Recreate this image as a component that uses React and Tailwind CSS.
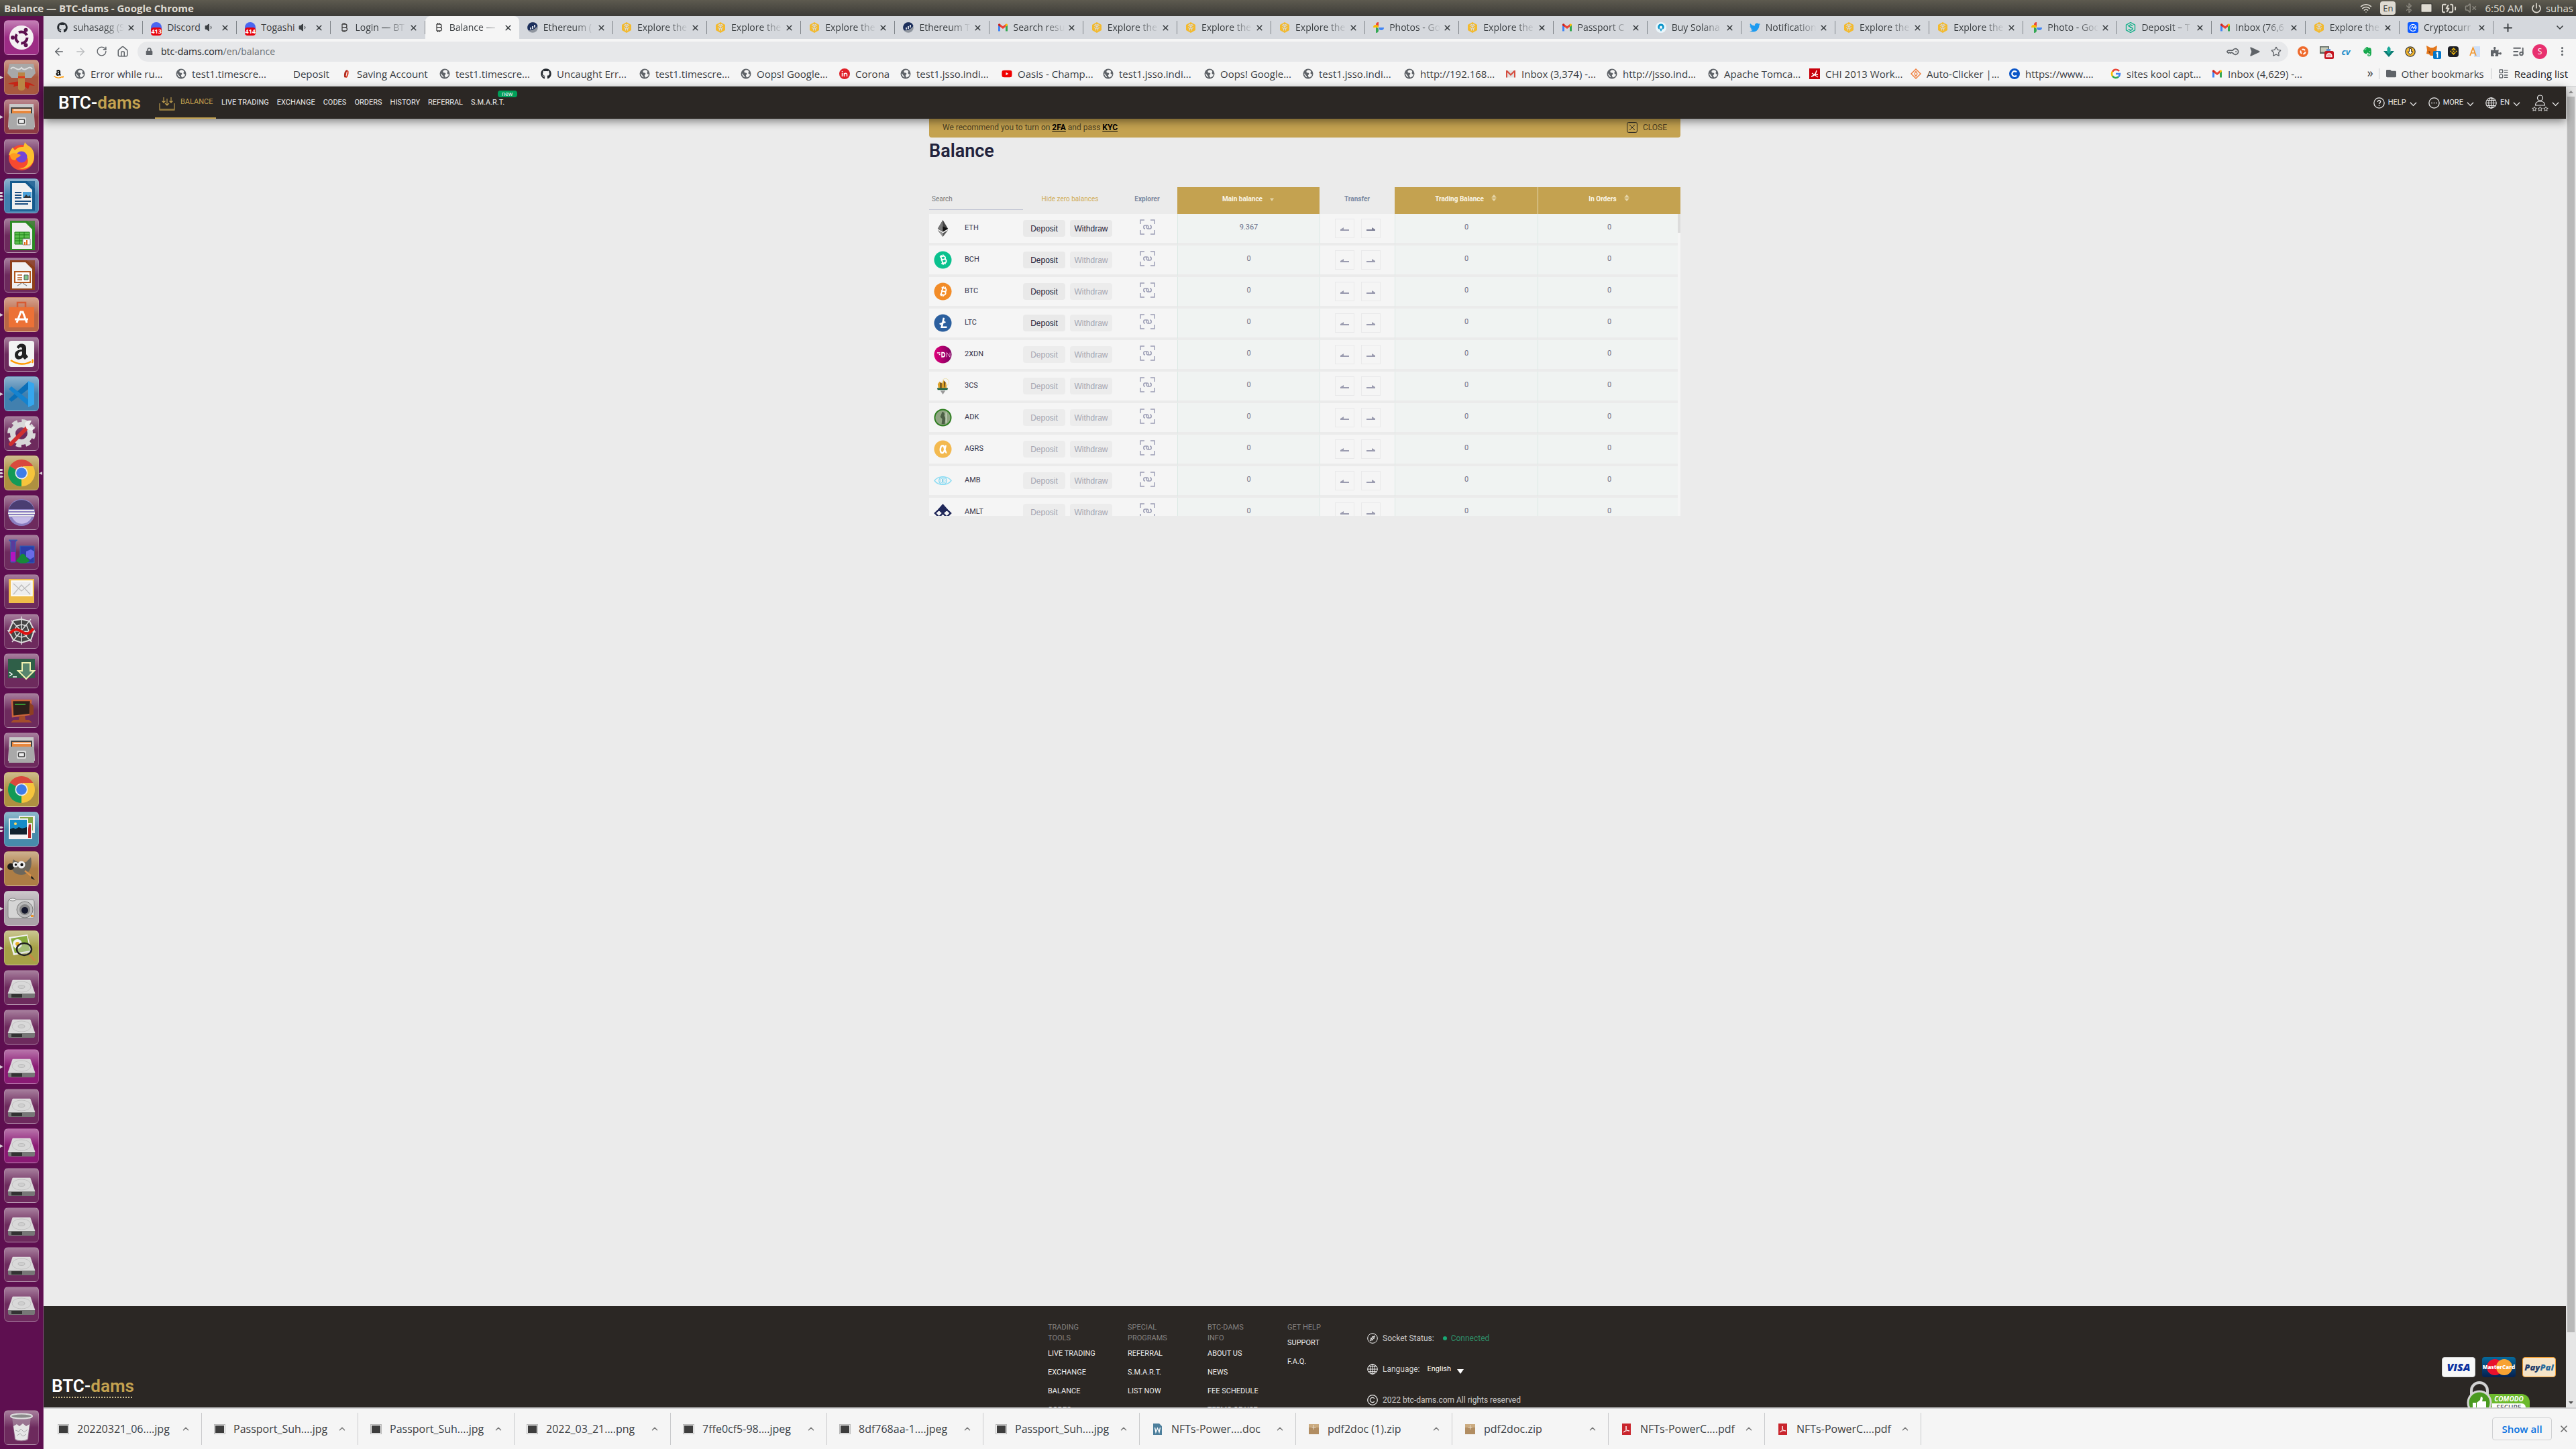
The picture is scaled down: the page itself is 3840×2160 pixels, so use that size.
import React from "react";
import { FaGithub, FaTwitter, FaYoutube, FaEvernote, FaPuzzlePiece, FaFolder, FaUbuntu, FaLock } from "react-icons/fa";
import { SiBinance } from "react-icons/si";
import {
  ArrowLeft, ArrowRight, RotateCw, House, Star, X, Plus, ChevronDown, ChevronUp, Wifi, Bluetooth, Mail,
  BatteryCharging, VolumeX, Volume1, KeyRound, SendHorizontal, ListMusic, EllipsisVertical, LayoutList, Power,
} from "lucide-react";

/* ---------- small site icons ---------- */

const Svg = ({ size = 16, box = 16, children, className = "" }) => (
  <svg width={size} height={size} viewBox={`0 0 ${box} ${box}`} fill="none" className={`shrink-0 ${className}`} aria-hidden="true">
    {children}
  </svg>
);

const Globe = () => (
  <Svg>
    <circle cx="8" cy="8" r="7.500" fill="#5f6368" />
    <path d="M9 2.200c-2.200.2-3.400 1-3.600 2.200-.2 1.400.8 2 2.200 2.100 1.500.1 2 .9 1.600 1.900-.3.8-1.300 1-1.300 2.200 0 1 .6 1.600 1.400 2.900C12 13 14 11 14 8.500 12.500 9 11.500 8 11.500 6.800c0-1 .8-1.500.6-2.600C11.500 3 10.300 2.200 9 2.200zM2 7.500c.3 2.900 2 5 4.300 5.900-.3-1.300-.3-2-1.300-2.700C3.800 10 3.700 8 2 7.500z" fill="#f5f5f5" />
  </Svg>
);
const Gmail = () => (
  <Svg>
    <path d="M1 4v9.500h3V7z" fill="#4285f4" />
    <path d="M15 4v9.500h-3V7z" fill="#34a853" />
    <path d="M1 4c0-1.600 1.600-2 2.600-1.200L8 6.200l4.400-3.400L12 7 8 10 4 7 1 4.800z" fill="#ea4335" />
    <path d="M15 4.800 12 7V3.100l.4-.3C13.400 2 15 2.400 15 4z" fill="#fbbc04" />
    <path d="M1 4.800V4c0-1.600 1.600-2 2.600-1.200L4 3.100V7z" fill="#c5221f" />
  </Svg>
);
const GmailOld = () => (
  <Svg>
    <path d="M1 3h14v10.500H1z" fill="#e0e0e0" />
    <path d="M1 3h2l5 5 5-5h2v10.500h-2V6L8 11 3 6v7.500H1z" fill="#d54b3d" />
  </Svg>
);
const Photos = () => (
  <Svg>
    <path d="M8 8V0a4 4 0 0 0-4 4 4 4 0 0 0 4 4z" fill="#ea4335" />
    <path d="M8 8h8a4 4 0 0 1-4 4 4 4 0 0 1-4-4z" fill="#4285f4" />
    <path d="M8 8v8a4 4 0 0 0 4-4 4 4 0 0 0-4-4z" fill="#34a853" transform="translate(-4 0)" />
    <path d="M8 8H0a4 4 0 0 1 4-4 4 4 0 0 1 4 4z" fill="#fbbc04" />
  </Svg>
);
const DiscordFav = ({ n }) => (
  <span className="relative block h-4 w-4 shrink-0 rounded-t-full bg-[#4a66f0]">
    <span className="absolute inset-x-0 -bottom-1 rounded-sm bg-red-600 text-center text-[9px] leading-3 font-bold text-white">{n}</span>
  </span>
);
const BitFav = () => (
  <Svg>
    <path d="M5 3v10M5 3h4.500a2.400 2.400 0 0 1 0 5H5h5a2.500 2.500 0 0 1 0 5H5M6.500 1v2M9 1v2M6.500 13v2M9 13v2" stroke="#444" strokeWidth="1.300" />
  </Svg>
);
const EtherFav = () => (
  <Svg>
    <circle cx="8" cy="8" r="7.800" fill="#8f959e" />
    <path d="M8 .2A7.800 7.800 0 0 0 1.500 12.200C6 13 13 10 15.500 5.500A7.800 7.800 0 0 0 8 .2z" fill="#1c2f5c" />
    <path d="M5 8v3M8 6v4M11 4v4" stroke="#fff" strokeWidth="1.600" />
  </Svg>
);
const Bnb = () => (
  <Svg>
    <path d="M8 0l7 4v8l-7 4-7-4V4z" fill="#f3ba2f" />
    <path d="M4 4.500l4 2.300 4-2.300M4 8l2.500 1.500v3M12 8 9.500 9.500v3M8 7v3M5.500 3 8 4.500 10.500 3" stroke="#d5d8dd" strokeWidth="1.200" />
  </Svg>
);
const Solana = () => (
  <Svg>
    <circle cx="8" cy="8" r="8" fill="#eaf6fb" />
    <path d="M8 2.500a4.500 4.500 0 0 0-3 8l1 .5V7.500a2 2 0 1 1 4 0V11l1-.5a4.500 4.500 0 0 0-3-8z" fill="#0a94c9" />
    <path d="M7 9.500h2V12l-1 2-1-2z" fill="#0a94c9" />
  </Svg>
);
const Hexa = () => (
  <Svg>
    <path d="M8 .5l6.500 3.700v7.600L8 15.500l-6.500-3.700V4.200z" stroke="#16b08a" strokeWidth="1.400" />
    <path d="M11 5.500 8 3.800 4.800 5.600 11 9.300v1.300L8 12.300l-3.200-1.800M8 7v2" stroke="#16b08a" strokeWidth="1.500" />
  </Svg>
);
const Cmc = () => (
  <Svg>
    <rect width="16" height="16" rx="3" fill="#0d5bff" />
    <path d="M12.300 11a5 5 0 1 1 .7-3c0 2-2 2-2 0V6.500L8.800 9.500 7.300 6.500 5 9.500" stroke="#fff" strokeWidth="1.100" />
  </Svg>
);
const AmazonFav = () => (
  <Svg>
    <path d="M5 4.200C5.500 1.200 11 1 11 4.500v4l1 1.300-1.700 1.300L9.200 10C7.500 11.700 4.500 11 4.500 8.300c0-2.500 2.500-3 4.400-3.100 0-1.500-1.700-1.500-2 0zM8.900 6.600C7.500 6.700 6.800 7.200 6.800 8.200c0 1.500 2.100 1.300 2.100-.7z" fill="#111" />
    <path d="M1.500 11.500c4 3.200 9 3.200 12.500.6M14.500 14c.6-1 .8-2 .5-2.600" stroke="#f90" strokeWidth="1.400" />
  </Svg>
);
const Saving = () => (
  <Svg>
    <path d="M9.500 2C6 3 4.500 7 5 12c.1 1.500 1.500 2.400 3 1L10 3z" fill="#b02a1e" />
    <path d="M10 3c2 0 2 3 1.300 6-.6 3-2 5-3.600 5z" fill="#e2472f" />
    <path d="M9.200 5 8 11" stroke="#f5f5f5" strokeWidth="1" />
  </Svg>
);
const Corona = () => (
  <Svg>
    <circle cx="8" cy="8" r="8" fill="#e02128" />
    <path d="M4.500 7v5M4.500 4v1.500M7.500 12V7M7.500 9c0-2.500 4-2.500 4 0v3" stroke="#fff" strokeWidth="1.500" />
  </Svg>
);
const Chi = () => (
  <Svg>
    <rect width="16" height="16" fill="#c8000b" />
    <path d="M3 12c4-1 7-4 8-9M4 7l9 6M9 9l4 0" stroke="#fff" strokeWidth="1.400" />
  </Svg>
);
const AutoClick = () => (
  <Svg>
    <path d="M8 1l7 7-7 7-7-7z" stroke="#f08040" strokeWidth="1.500" />
    <path d="M8 4.500c2.500 3 2.500 4 0 7-2.500-3-2.500-4 0-7z" stroke="#f08040" strokeWidth="1.400" />
  </Svg>
);
const CBlue = () => (
  <Svg>
    <circle cx="8" cy="8" r="8" fill="#0a55c8" />
    <path d="M11 5.500a3.800 3.800 0 1 0 0 5" stroke="#fff" strokeWidth="2.200" />
  </Svg>
);
const GoogleG = () => (
  <Svg>
    <path d="M13 4A6 6 0 0 0 3 4.800" stroke="#ea4335" strokeWidth="2.600" />
    <path d="M3 4.800a6 6 0 0 0 0 6.400" stroke="#fbbc04" strokeWidth="2.600" />
    <path d="M3 11.200a6 6 0 0 0 9 1.300" stroke="#34a853" strokeWidth="2.600" />
    <path d="M12 12.500A6 6 0 0 0 14 8H8" stroke="#4285f4" strokeWidth="2.600" />
  </Svg>
);

/* ---------- browser chrome ---------- */

const gh = <FaGithub size={16} color="#24292f" className="shrink-0" />;
const tabs = [
  { t: "suhasagg (S", i: gh },
  { t: "Discord", i: <DiscordFav n="413" />, sound: true },
  { t: "Togashi", i: <DiscordFav n="414" />, sound: true },
  { t: "Login — BT", i: <BitFav /> },
  { t: "Balance — ", i: <BitFav />, active: true },
  { t: "Ethereum (", i: <EtherFav /> },
  { t: "Explore the", i: <Bnb /> },
  { t: "Explore the", i: <Bnb /> },
  { t: "Explore the", i: <Bnb /> },
  { t: "Ethereum T", i: <EtherFav /> },
  { t: "Search resu", i: <Gmail /> },
  { t: "Explore the", i: <Bnb /> },
  { t: "Explore the", i: <Bnb /> },
  { t: "Explore the", i: <Bnb /> },
  { t: "Photos - Go", i: <Photos /> },
  { t: "Explore the", i: <Bnb /> },
  { t: "Passport C", i: <Gmail /> },
  { t: "Buy Solana", i: <Solana /> },
  { t: "Notification", i: <FaTwitter size={16} color="#1d9bf0" className="shrink-0" /> },
  { t: "Explore the", i: <Bnb /> },
  { t: "Explore the", i: <Bnb /> },
  { t: "Photo - Goo", i: <Photos /> },
  { t: "Deposit – T", i: <Hexa /> },
  { t: "Inbox (76,6", i: <Gmail /> },
  { t: "Explore the", i: <Bnb /> },
  { t: "Cryptocurr", i: <Cmc /> },
];

function Tab({ t, i, sound, active }) {
  return (
    <div className={active ? "flex h-full min-w-0 flex-1 items-center rounded-t-lg bg-[#f5f5f5]" : "flex h-full min-w-0 flex-1 items-center"}>
      <div className={active ? "flex min-w-0 flex-1 items-center pr-2.5 pl-3" : "flex h-5 min-w-0 flex-1 items-center border-r border-[#7f8489] pr-2.5 pl-3"}>
        {i}
        <span
          className={
            sound
              ? "ml-2 min-w-0 flex-1 whitespace-nowrap"
              : "ml-2 min-w-0 flex-1 overflow-hidden whitespace-nowrap [mask-image:linear-gradient(to_right,black_60%,transparent)]"
          }
        >
          {t}
        </span>
        {sound && <Volume1 size={14} fill="#3c4043" className="mr-1.5 shrink-0" />}
        <button aria-label={`Close ${t}`} className="ml-1 shrink-0"><X size={13} strokeWidth={3} /></button>
      </div>
    </div>
  );
}

function TabStrip() {
  return (
    <div className="flex h-[34px] items-center bg-[#d5d8dd] pl-2 text-[14px] text-[#3c4043]">
      {tabs.map((tab, k) => <Tab key={k} {...tab} />)}
      <div className="flex w-[123px] shrink-0 items-center justify-between pr-4 pl-3">
        <button aria-label="New tab"><Plus size={19} strokeWidth={2.5} /></button>
        <button aria-label="Search tabs"><ChevronDown size={16} strokeWidth={2.5} /></button>
      </div>
    </div>
  );
}

const extensions = [
  <Svg key="a"><circle cx="8" cy="8" r="8" fill="#ee6a2c" /><circle cx="8" cy="8" r="3.500" stroke="#fff" strokeWidth="2" strokeDasharray="5 2.300" /></Svg>,
  <Svg key="b" size={22} box={22} className="-mr-1.5">
    <path d="M1 3h14v11H1z" fill="#5c6660" /><path d="M2.500 4.500h11v7h-11z" fill="#c6cbb8" /><path d="M11 7h6v6h-6z" fill="#5b8fd0" />
    <rect x="8" y="10" width="14" height="12" rx="2.500" fill="#c4141f" /><path d="M11 18.500v-1a4 4 0 0 1 8 0v1zM11 16h8" stroke="#fff" strokeWidth="1.300" />
  </Svg>,
  <span key="c" className="w-4 text-center text-[13px] leading-4 font-bold text-[#1d8ac8] italic">cv</span>,
  <FaEvernote key="d" size={16} color="#14a84c" />,
  <Svg key="e"><path d="M0 7h5l3 3 3-3h5l-8 9z" fill="#0b7d74" /><path d="M8 0l2.500 3v6L8 11.500 5.500 9V3z" fill="#1aa898" /></Svg>,
  <Svg key="f"><circle cx="8" cy="8" r="7.200" fill="#f2b52c" stroke="#333" strokeWidth="1.200" /><path d="M6.500 3.500h3V8H12l-4 4.500L4 8h2.500z" fill="#fff" stroke="#333" /></Svg>,
  <Svg key="g" size={22} box={22} className="-mr-1.5">
    <path d="M0 2l6 3h4l6-3-1 7 1 5-4 1-2 2H6l-2-2-4-1 1-5z" fill="#e2761b" /><path d="M3 10l3 1-1 3zM13 10l-3 1 1 3z" fill="#763d16" />
    <rect x="10" y="10" width="12" height="12" rx="2" fill="#0376c9" /><path d="M14.500 13.500 16.500 12.500V20" stroke="#fff" strokeWidth="1.800" />
  </Svg>,
  <span key="h" className="flex h-4 w-4 items-center justify-center rounded-sm bg-[#1e2026]"><SiBinance size={11} color="#f0b90b" /></span>,
  <Svg key="i"><path d="M7 0h9v16H7z" fill="#cfe0f8" /><path d="M1 14 5.500 2 10 14M2.500 10h6" stroke="#f0962e" strokeWidth="1.700" /></Svg>,
  <FaPuzzlePiece key="j" size={16} color="#5f6368" />,
  <ListMusic key="k" size={18} color="#5f6368" strokeWidth={2.5} />,
];

function Toolbar() {
  return (
    <div className="flex h-[37px] items-center bg-[#f5f5f5] pr-3 pl-3 text-[#5f6368]">
      <div className="flex w-32 shrink-0 items-center gap-3.5 pl-0.5">
        <button aria-label="Back"><ArrowLeft size={18} /></button>
        <button aria-label="Forward" className="text-[#babcbe]"><ArrowRight size={18} /></button>
        <button aria-label="Reload"><RotateCw size={17} /></button>
        <button aria-label="Home"><House size={18} /></button>
      </div>
      <div className="flex h-[30px] flex-1 items-center gap-3 rounded-full bg-[#e7e8ea] pr-2.5 pl-3">
        <FaLock size={11} />
        <p className="flex-1 text-[14px] text-[#6b6f73]"><span className="text-[#202124]">btc-dams.com</span>/en/balance</p>
        <div className="flex items-center gap-4">
          <button aria-label="Saved passwords"><KeyRound size={16} strokeWidth={2.5} className="rotate-45" /></button>
          <button aria-label="Send"><SendHorizontal size={16} fill="#5f6368" /></button>
          <button aria-label="Bookmark this page"><Star size={16} /></button>
        </div>
      </div>
      <div className="flex items-center gap-4 pl-3.5">
        {extensions.map((e, k) => <button key={k} className="flex items-center" aria-label={`Extension ${k + 1}`}>{e}</button>)}
        <button className="-ml-1 h-[22px] w-[22px] rounded-full bg-[#e8306f] text-[12px] text-white" aria-label="Profile">S</button>
        <button aria-label="Menu" className="-ml-0.5"><EllipsisVertical size={17} strokeWidth={2.5} /></button>
      </div>
    </div>
  );
}

const W = "w-[151px]";
const V = "w-[147px]";
const bookmarks = [
  ["", <AmazonFav />, "w-8"],
  ["Error while ru...", <Globe />, W],
  ["test1.timescre...", <Globe />, W],
  ["Deposit", <span className="w-4" />, "w-[95px]"],
  ["Saving Account", <Saving />, V],
  ["test1.timescre...", <Globe />, W],
  ["Uncaught Err...", gh, V],
  ["test1.timescre...", <Globe />, W],
  ["Oops! Google...", <Globe />, V],
  ["Corona", <Corona />, "w-[91px]"],
  ["test1.jsso.indi...", <Globe />, W],
  ["Oasis - Champ...", <FaYoutube size={16} color="#f00000" className="shrink-0" />, W],
  ["test1.jsso.indi...", <Globe />, W],
  ["Oops! Google...", <Globe />, V],
  ["test1.jsso.indi...", <Globe />, W],
  ["http://192.168...", <Globe />, W],
  ["Inbox (3,374) -...", <GmailOld />, W],
  ["http://jsso.ind...", <Globe />, W],
  ["Apache Tomca...", <Globe />, W],
  ["CHI 2013 Work...", <Chi />, W],
  ["Auto-Clicker |...", <AutoClick />, V],
  ["https://www....", <CBlue />, W],
  ["sites kool capt...", <GoogleG />, W],
  ["Inbox (4,629) -...", <Gmail />, W],
];

function Bookmarks() {
  return (
    <nav className="flex h-[34px] items-center border-b border-[#cfd1d3] bg-[#f5f5f5] pr-3 pl-3.5 pb-1 text-[#3c4043]" aria-label="Bookmarks">
      {bookmarks.map(([t, icon, w], k) => (
        <a key={k} href="#" aria-label={t || "Amazon"} className={`flex shrink-0 items-center gap-2 whitespace-nowrap ${w}`}>
          {icon}
          {t && <span>{t}</span>}
        </a>
      ))}
      <span className="flex-1" />
      <button className="pr-2 pb-1 text-[18px] leading-5" aria-label="More bookmarks">»</button>
      <a href="#" className="flex h-4 items-center gap-2 border-l border-[#c6c8ca] px-2.5 whitespace-nowrap"><FaFolder size={15} color="#5f6368" />Other bookmarks</a>
      <a href="#" className="flex h-4 items-center gap-2 border-l border-[#c6c8ca] pl-2.5 whitespace-nowrap text-[#202124]"><LayoutList size={16} color="#5f6368" />Reading list</a>
    </nav>
  );
}

/* ---------- desktop launcher ---------- */

const Disk = () => (
  <>
    <path d="M11 13h26l7 20H4z" fill="#d9d9d9" stroke="#eee" strokeWidth=".6" />
    <ellipse cx="24" cy="23" rx="14" ry="8" fill="none" stroke="#bdbdbd" strokeWidth=".8" />
    <ellipse cx="24" cy="23" rx="5" ry="2.500" fill="#cfcfcf" stroke="#aaa" strokeWidth=".6" />
    <path d="M4 33h40v5l-1 2H5l-1-2z" fill="#777" />
    <path d="M9 34h16v5H9z" fill="#333" />
  </>
);
const Doc = ({ c, children }) => (
  <>
    <path d="M7 2h25l12 11v33H7z" fill={c} />
    <path d="M10 5h20l10 10v29H10z" fill="#f0f0f0" />
    <path d="M31 2h13v12z" fill={c} opacity=".75" />
    {children}
  </>
);
const ChromeIcon = () => (
  <>
    <path d="M24 24 6.700 14A20 20 0 0 1 41.300 14z" fill="#d9493d" />
    <path d="M24 24 6.700 14A20 20 0 0 0 24 44l8-15z" fill="#139a57" />
    <path d="M24 24v20A20 20 0 0 0 41.300 14H26z" fill="#f6c43c" />
    <circle cx="24" cy="24" r="9.500" fill="#eee" />
    <circle cx="24" cy="24" r="7.800" fill="#3f7de8" />
  </>
);
const Cabinet = () => (
  <>
    <path d="M6 5h36l2 35H4z" fill="#c9c9c9" />
    <path d="M8 10h32v10H8z" fill="#444" />
    <path d="M10 12h28v8H10z" fill="#e8873c" />
    <path d="M12 14h26" stroke="#fff" strokeWidth="1.500" />
    <path d="M5 19h38v24H5z" fill="#a9a9a9" />
    <rect x="17" y="25" width="14" height="12" rx="2" fill="#ddd" />
    <rect x="19.500" y="28" width="9" height="6" rx="1" fill="#eee" stroke="#444" strokeWidth="1.500" />
  </>
);
const UbuntuMark = () => (
  <>
    <circle cx="24" cy="24" r="18" fill="#f4f0f3" />
    <circle cx="24" cy="24" r="8.500" fill="none" stroke="#5d1050" strokeWidth="4" strokeDasharray="14 3.800" />
    <circle cx="11" cy="24" r="3" fill="#5d1050" />
    <circle cx="30.500" cy="12.700" r="3" fill="#5d1050" />
    <circle cx="30.500" cy="35.300" r="3" fill="#5d1050" />
  </>
);

const plain = "bg-[#6d2a5d]";
const launcher = [
  ["Dash", "bg-[#9c2c85]", <UbuntuMark />],
  ["Keyring", "bg-[#a9583f]", <><path d="M6 4h36l3 14-6 7H9l-6-7z" fill="#a8a8a8" /><path d="M8 12c5-8 9 6 16-2 7 8 11-6 16 2" stroke="#ddd" strokeWidth="2" fill="none" /><path d="M4 34c10-5 30-5 40 3l-8-1-2 6c-6-6-14-7-22-3l1-4z" fill="#c52516" /><path d="M19 17h10v24c0 4-10 4-10 0z" fill="#b98646" /><path d="M19 24h10" stroke="#d93a20" strokeWidth="3" /></>, 1],
  ["Files", "bg-[#8d3a44]", <Cabinet />, 1],
  ["Firefox", plain, <><circle cx="24" cy="26" r="19" fill="#f7492f" /><path d="M5 22C8 14 9 13 11 11l3 4c5-4 6-5 13-5L29 3c3 4 5 5 8 7 6 5 8 15 4 23-5 9-16 12-22 8 9 3 17-5 14-14-5-6-10-6-18-3z" fill="#fcc12f" /><circle cx="24" cy="25" r="8.500" fill="#7446d8" /><path d="M7 22c4-5 10-2 16 0-2 4-7 3-8 8-5 0-8-3-8-8z" fill="#ff9a1f" /></>],
  ["Writer", "bg-[#4280ae]", <Doc c="#145a8d"><path d="M14 19h10M14 23h10M14 27h10M14 32h24M14 36h20" stroke="#1a4d80" strokeWidth="2" /><path d="M26 18h13v9H26z" fill="#4aa0d8" /><path d="m27 27 4-5 3 3 2-2 2 4z" fill="#333" /></Doc>, 3],
  ["Calc", plain, <Doc c="#2c8a24"><path d="M14 19h22v18H14z" fill="#5cc04e" stroke="#187d14" /><path d="M14 23h22M14 28h22M14 32h22M21 19v18M28 19v18" stroke="#187d14" /><path d="M26 29h11v9H26z" fill="#fff" stroke="#888" /><path d="M29 38v-4M32 38v-7" stroke="#e06f20" strokeWidth="2" /></Doc>],
  ["Impress", plain, <Doc c="#8d3f1a"><path d="M14 19h23v16H14z" fill="#fff" stroke="#b3581d" strokeWidth="2" /><path d="M18 24h7M18 28h7M18 31h7" stroke="#b3581d" strokeWidth="1.500" /><path d="M28 24h6v7h-6z" fill="#7fc88a" stroke="#555" /><path d="M24 36l-6 4M26 36l6 4" stroke="#888" strokeWidth="1.500" /></Doc>],
  ["Software", "bg-[#b96645]", <><path d="M5 13h38v30H5z" fill="#ec7136" /><path d="M18 13V6h12v7" fill="none" stroke="#d75a32" strokeWidth="2.500" /><path d="M17 36l6-16h3l6 16M14 31h20" fill="none" stroke="#fff" strokeWidth="3" /></>, 1],
  ["Amazon", plain, <><rect x="5" y="4" width="38" height="39" rx="4" fill="#f3f3f3" /><path d="M17 14c1-7 14-8 14 1v9l3 4-5 4-3-3c-5 5-12 3-12-4 0-6 6-8 11-8 0-5-4-4-5-1zM25 20c-4 0-6 2-6 4.500 0 4 6 3 6-2z" fill="#222" /><path d="M8 33c10 7 22 7 30 2M40 37c1-2 1-4 0-5" fill="none" stroke="#f90" strokeWidth="2.500" /></>],
  ["Code", "bg-[#4280ae]", <><path d="M34 6 5 32l4 4 28-21z" fill="#0a6fb8" /><path d="M34 42 5 17l4-4 28 22z" fill="#1583cf" /><path d="m34 5 9 4v31l-9 4z" fill="#35a6ee" /></>, 1],
  ["Settings", plain, <><circle cx="24" cy="24" r="13" fill="none" stroke="#d8d8d8" strokeWidth="8" /><circle cx="24" cy="24" r="18.500" fill="none" stroke="#d8d8d8" strokeWidth="5" strokeDasharray="8 6.500" /><path d="M8 40 32 16" stroke="#d03030" strokeWidth="6" strokeLinecap="round" /><path d="M29 10l3 8 8 2 5-6-6 1-3-4 3-6c-5-1-9 1-10 5z" fill="#eee" /></>],
  ["Chrome", "bg-[#ae9040]", <ChromeIcon />, 3, true],
  ["Eclipse", plain, <><circle cx="24" cy="24" r="20" fill="#8a7fc0" /><path d="M5 19a20 20 0 0 1 38 0z" fill="#4a3d72" /><path d="M10 31h29c-5 12-22 14-29 0z" fill="#c5bce8" /><path d="M5 21h38M4 25h40M5 29h38" stroke="#eee" strokeWidth="1.800" /></>],
  ["Chemistry", plain, <><path d="M5 6h13l-3 3v30H8V9z" fill="#5b3a9a" stroke="#2a63b8" /><path d="M8 24h7v14H8z" fill="#b314c0" /><path d="M22 15h21v25H22z" fill="#2c3ca8" stroke="#2a63b8" /><path d="m16 37 8-10h4l8 10c-4 5-16 5-20 0z" fill="#178a3a" /><path d="M31 23l7-3 5 3v8l-6 4-6-4z" fill="#6a6ae8" /></>],
  ["Mail", plain, <><path d="M5 5h38v36H5z" fill="#eebc4a" /><path d="M9 8h31v22H9z" fill="#eee" stroke="#fff" strokeWidth="1.500" /><path d="m12 28 12-14 13 14M12 12l12 11 13-11" fill="none" stroke="#bbb" strokeWidth="1.200" /></>],
  ["Web", plain, <><path d="M12 8 24 6l12 3 7 14-5 14-14 4-12-4-7-13z" fill="#444" stroke="#ddd" strokeWidth="2" /><path d="M24 2v42M3 23l42 2M9 8l30 32M38 6 10 40M17 16l7-2 8 2 3 8-4 7-7 2-8-3-3-7z" stroke="#ddd" strokeWidth="1.500" fill="none" /><path d="M7 27c7-8 12-6 18-2s10 4 17-5" fill="none" stroke="#e01010" strokeWidth="4" /></>],
  ["Installer", plain, <><path d="M4 6h40v29H4z" fill="#2f5f48" /><path d="m6 26 4 3-4 3M11 33h6" stroke="#fff" strokeWidth="1.500" fill="none" /><path d="M25 12h12v12h6L31 36 19 24h6z" fill="#59866d" stroke="#eef0b0" strokeWidth="2" /></>],
  ["Terminal", plain, <><path d="M10 9h28l-1 21-26 3z" fill="#2d1f1a" stroke="#c9643b" strokeWidth="2.500" /><path d="M14 15h16" stroke="#3cba3c" strokeWidth="1.500" /><path d="M21 32h8l1 6H20zM12 38h23l5 4H8z" fill="#a44d2c" /><path d="m37 13 5 4v13l-6 2z" fill="#8d3f22" /></>],
  ["Archive", plain, <Cabinet />],
  ["Chrome 2", "bg-[#ae9040]", <ChromeIcon />, 1],
  ["Photos", "bg-[#478bab]", <><path d="M20 4h24v26H20z" fill="#eee" /><path d="M22 6h19v20H22z" fill="#84a845" /><path d="M34 16h5v22h-8z" fill="#b52626" stroke="#eee" strokeWidth="2" /><path d="M5 8h29v31H5z" fill="#f3f3f3" /><path d="M7 10h25v22H7z" fill="#168cc8" /><path d="M7 24l5-2 3 2 5-3 5 2 7-2v11H7z" fill="#10222e" /><circle cx="15" cy="16" r="2" fill="#ffd75c" /></>, 2],
  ["Gimp", "bg-[#ad7d45]", <><path d="M12 10c5 5 12 5 19 4l7-7c3 14-2 26-14 26-8 0-14-4-15-13z" fill="#6d675c" /><ellipse cx="8" cy="21" rx="5" ry="5" fill="#1c1c1c" /><circle cx="15" cy="18" r="4" fill="#eee" /><circle cx="24" cy="18" r="5.500" fill="#eee" /><circle cx="15.500" cy="18" r="1.800" fill="#111" /><circle cx="24.500" cy="18" r="2.200" fill="#111" /><path d="m29 27 11 9" stroke="#d8914a" strokeWidth="2.500" /><path d="m39 34 5 7-6-3z" fill="#222" /></>, 1],
  ["Camera", "bg-[#aba3a9]", <><rect x="4" y="11" width="39" height="28" rx="3" fill="#d5d5d5" stroke="#888" /><circle cx="29" cy="26" r="12" fill="#bbb" stroke="#777" /><circle cx="29" cy="26" r="8" fill="#888" /><circle cx="29" cy="27" r="5" fill="#15182c" /><path d="M38 34h4v3h-4z" fill="#e9932c" /><ellipse cx="11" cy="11" rx="5" ry="2" fill="#eee" stroke="#888" /></>, 1],
  ["Image viewer", "bg-[#a6a047]", <><path d="M5 8 33 4l6 26-27 5z" fill="#f0f0f0" /><path d="m8 10 24-4 5 22-23 4z" fill="#87ad3e" /><circle cx="18" cy="18" r="7" fill="#f3f3f3" /><circle cx="18" cy="18" r="3" fill="#e8b12c" /><ellipse cx="28" cy="26" rx="11" ry="9" fill="#ccd8cc" fillOpacity=".4" stroke="#222" strokeWidth="2.500" /><path d="m36 34 8 9" stroke="#c98945" strokeWidth="3" /></>, 1],
  ...[0, 0, 1, 0, 1, 0, 0, 0, 0].map((n, k) => [`Disk ${k + 1}`, n ? "bg-[#8a1a74]" : plain, <Disk />, n]),
];

const Marks = ({ n }) => (
  <span className="flex w-1.5 shrink-0 flex-col items-start justify-center">
    {n === 1 && <Svg size={5} box={5}><path d="M0 0l5 2.500L0 5z" fill="#d8d0d6" /></Svg>}
    {n > 1 && Array.from({ length: n }, (_, k) => <Svg key={k} size={5} box={5}><path d="M0 1h3l2 1.500L3 4H0z" fill="#d8d0d6" /></Svg>)}
  </span>
);

function Tile({ name, bg, art, n, focus }) {
  return (
    <div className="flex shrink-0">
      <Marks n={n} />
      <button aria-label={name} className={`flex h-[52px] w-[52px] items-center justify-center rounded-md border border-white/20 bg-linear-to-b from-white/40 via-transparent to-transparent ${bg}`}>
        <svg width="48" height="48" viewBox="0 0 48 48">{art}</svg>
      </button>
      {focus && <span className="flex w-1.5 items-center"><Svg size={5} box={5}><path d="M5 0 0 2.500 5 5z" fill="#d8d0d6" /></Svg></span>}
    </div>
  );
}

function Launcher() {
  return (
    <aside className="flex w-[65px] shrink-0 flex-col justify-between overflow-hidden border-r border-[#84457a] bg-[#5e0f50] pt-1.5 pb-1.5">
      <div className="flex flex-col gap-[7px]">
        {launcher.map(([name, bg, art, n, focus]) => <Tile key={name} name={name} bg={bg} art={art} n={n} focus={focus} />)}
      </div>
      <Tile
        name="Trash"
        bg={plain}
        art={<><path d="M10 8h28l-4 34c-1 3-19 3-20 0z" fill="#a58a9f" fillOpacity=".7" /><path d="m12 22 5-3 4 3 5-4 5 4 5-3-3 22c-5 3-14 3-18 0z" fill="#e6e6e6" /><path d="m15 28 5 2 3-4 5 5 5-4M17 36l5-3 4 4 5-3" stroke="#aaa" fill="none" /><ellipse cx="24" cy="7" rx="16" ry="3.500" fill="#8a8a8a" stroke="#ddd" strokeWidth="2" /></>}
      />
    </aside>
  );
}

/* ---------- site ---------- */

const Logo = () => (
  <span className="text-[26px] leading-8 font-semibold text-white">BTC-<span className="text-[#c4a250]">dams</span></span>
);
const Chev = () => (
  <Svg size={11} box={12} className="mt-1"><path d="M1 3l5 5 5-5" stroke="#eee" strokeWidth="1.400" /></Svg>
);
const GlobeLine = ({ size = 17 }) => (
  <Svg size={size} box={16}><g stroke="#eee"><circle cx="8" cy="8" r="7.300" /><ellipse cx="8" cy="8" rx="3.500" ry="7.300" /><path d="M8 .7v14.600M.7 8h14.600M2 4.300h12M2 11.700h12" /></g></Svg>
);

function SiteHeader() {
  const links = ["LIVE TRADING", "EXCHANGE", "CODES", "ORDERS", "HISTORY", "REFERRAL"];
  const menu = "flex items-center gap-[5px]";
  return (
    <header className="relative z-10 flex h-12 shrink-0 items-center justify-between bg-[#2b2724] pr-2.5 pl-[22px] text-[11px] text-[#eeeeee] shadow-[0_4px_12px_rgba(0,0,0,0.45)]">
      <div className="flex h-full items-center">
        <a href="#" className="w-36"><Logo /></a>
        <nav className="flex h-full items-center gap-3" aria-label="Main">
          <a href="#" className="-mr-1 flex h-full w-[91px] items-center gap-2 border-b-2 border-[#c4a250] pl-1.5 text-[#c4a250]">
            <Svg size={24} box={24} className="mt-1">
              <path d="M1 12v10h22V12M7 3v8M4.500 8.500 7 11l2.500-2.500M12 5v10M9 12l3 3 3-3M18 3v8M15.500 8.500 18 11l2.500-2.500" stroke="#c4a250" strokeWidth="1.100" />
              <path d="M1 20h22v2.500H1z" fill="#8d753c" />
            </Svg>
            BALANCE
          </a>
          {links.map((l) => <a key={l} href="#" className="whitespace-nowrap">{l}</a>)}
          <a href="#" className="relative">
            S.M.A.R.T.
            <span className="absolute -top-2.5 left-10 rounded-sm bg-[#00a05a] px-1.5 text-[9px] leading-[10px]">new</span>
          </a>
        </nav>
      </div>
      <div className="flex items-center gap-[17px]">
        <button className={menu}><Svg size={17}><circle cx="8" cy="8" r="7.200" stroke="#eee" strokeWidth="1.200" /><path d="M6 6.500c0-3 4.300-2.500 4 0-.2 1.200-2 1.300-2 3M8 10.800v1.400" stroke="#eee" strokeWidth="1.300" /></Svg>HELP<Chev /></button>
        <button className={menu}><Svg size={17}><circle cx="8" cy="8" r="7.200" stroke="#eee" strokeWidth="1.200" /><path d="M4 8h1.500M7.300 8h1.500M10.500 8H12" stroke="#eee" strokeWidth="1.300" /></Svg>MORE<Chev /></button>
        <button className={menu}><GlobeLine />EN<Chev /></button>
        <button className={menu} aria-label="Account">
          <Svg size={25} box={25}>
            <circle cx="12.500" cy="5" r="4" stroke="#eee" strokeWidth="1.200" />
            <path d="M5.500 16c0-4 3-6 7-6s7 2 7 6z" stroke="#eee" strokeWidth="1.200" />
            <path d="M4 18l1 2.200 2.300.2-1.800 1.500.6 2.300L4 23l-2.100 1.200.6-2.300L.7 20.400l2.300-.2zM12.500 18l1 2.200 2.300.2-1.800 1.500.6 2.300-2.100-1.200-2.100 1.200.6-2.300-1.800-1.500 2.300-.2zM21 18l1 2.200 2.300.2-1.800 1.500.6 2.300L21 23l-2.100 1.200.6-2.300-1.800-1.500 2.300-.2z" stroke="#eee" strokeWidth=".8" />
          </Svg>
          <Chev />
        </button>
      </div>
    </header>
  );
}

const Disc = ({ c, children }) => (
  <Svg size={27} box={28}><circle cx="14" cy="14" r="13.500" fill={c} />{children}</Svg>
);
const bit = "M10.500 8.500h5.500c3 0 3.500 4.500.5 5 3.500.5 3 5.500-.5 5.500h-5.500M12.500 8.500v10.500M11 13.500h5.500M13 6v2.500M16 6v2.500M13 19v2.500M16 19v2.500";
const coins = [
  ["ETH", <Svg size={27} box={28}><path d="M14 1 6 14.500l8 4.700 8-4.700z" fill="#444" /><path d="M14 1v18.200l-8-4.700z" fill="#777" /><path d="M14 11v8.200l8-4.700z" fill="#111" /><path d="M6 16.500 14 27l8-10.500-8 4.700z" fill="#555" /><path d="M6 16.500 14 27v-5.800z" fill="#999" /></Svg>, "9.367", true, true],
  ["BCH", <Disc c="#0ac18e"><path d={bit} stroke="#fff" strokeWidth="1.900" transform="rotate(-14 14 14)" /></Disc>, "0", true],
  ["BTC", <Disc c="#f28c28"><path d={bit} stroke="#fff" strokeWidth="1.900" transform="rotate(14 14 14)" /></Disc>, "0", true],
  ["LTC", <Disc c="#2b5f9e"><path d="m15.500 6-3.300 14.500h8M9 16l9-4" stroke="#fff" strokeWidth="2.700" /></Disc>, "0", true],
  ["2XDN", <Svg size={27} box={28}><defs><linearGradient id="xdn"><stop offset="0" stopColor="#e0007a" /><stop offset="1" stopColor="#7a0060" /></linearGradient></defs><circle cx="14" cy="14" r="13.500" fill="url(#xdn)" /><path d="M5 11.500h5M8 14h2" stroke="#fff" strokeWidth="1.500" /><path d="M12.500 11v6.500h1.500c4 0 4-6.500 0-6.500z" stroke="#fff" strokeWidth="1.600" /><path d="M20 18v-7l5 7v-7" stroke="#f5b8dc" /></Svg>, "0"],
  ["3CS", <Svg size={27} box={28}><circle cx="18" cy="8" r="5.500" stroke="#eadfa8" /><path d="M6 11l3-4 4 3 2-5 4 4 1 8H7z" fill="#dba12b" /><path d="M10 9h2v8h-2zM16 6l2 2-1 8h-1z" fill="#4b3a20" /><path d="M5 17h17l-1 3H6z" fill="#155c3c" /><path d="M10 21h8l-4 6z" fill="#9a9a9a" /></Svg>, "0"],
  ["ADK", <Svg size={27} box={28}><circle cx="14" cy="14" r="12.500" fill="#90a583" stroke="#2c7d1e" strokeWidth="2" /><path d="M13 5c4 1 4 4 3 6l2 4-1 9h-5l1-8-3-3z" fill="#4c5f46" /><path d="M19 6v16" stroke="#cfdcc8" strokeWidth="1.500" /></Svg>, "0"],
  ["AGRS", <Disc c="#f3b94f"><path d="M18.500 8c-1 4-2 12-5.500 12-4 0-4-11 1-11.500 3-.3 2.500 11 6 11" stroke="#fff" strokeWidth="2.600" /></Disc>, "0"],
  ["AMB", <Svg size={27} box={28}><path d="M1 14c6-8 20-8 26 0-6 8-20 8-26 0z" stroke="#8ddcf3" strokeWidth="1.500" /><circle cx="14" cy="14" r="6" stroke="#8ddcf3" strokeWidth="1.500" /><circle cx="14" cy="14" r="3.800" stroke="#8ddcf3" /><path d="M14 11.500v5" stroke="#3ab8e0" strokeWidth="1.500" /></Svg>, "0"],
  ["AMLT", <Svg size={27} box={28}><path d="M14 1 6.500 9.500 14 17l7.500-7.500z" fill="#20285a" /><path d="M8 10 2 15.500l6 6 6-6zM20 10l-6 5.500 6 6 6-6z" fill="#f5f5f5" stroke="#20285a" strokeWidth="2.500" /></Svg>, "0"],
];

const ExplorerIcon = () => (
  <svg width="23" height="23" viewBox="0 0 23 23" fill="none" stroke="#9a9cb4" strokeWidth="1.400" aria-hidden="true">
    <path d="M1 7V1h6M16 1h6v6M22 16v6h-6M7 22H1v-6" />
    <path d="M8 14c-3 0-3-5 0-5h3c2 0 3 3 1 4M15 9c3 0 3 5 0 5h-3c-2 0-3-3-1-4" />
  </svg>
);

function ActionButton({ on, children }) {
  return (
    <button disabled={!on} className="h-[25px] flex-1 rounded-sm bg-[#e9e9e9] font-[Liberation_Sans,sans-serif] text-[12px] text-[#20203a] disabled:bg-[#ececec] disabled:text-[#a3a5b2]">
      {children}
    </button>
  );
}

function ArrowButton({ right, on }) {
  return (
    <button aria-label={right ? "Move to trading balance" : "Move to main balance"} className="flex h-[29px] w-[29px] items-center justify-center border border-[#e9e9ea]">
      <Svg size={13} box={13} className="mt-0.5">
        <path d={right ? "M0 7h8V4l5 3v2H0z" : "M13 7H5V4L0 7v2h13z"} fill={on ? "#7d7f96" : "#9b9cb0"} />
      </Svg>
    </button>
  );
}

const Sort = ({ both }) => (
  <Svg size={both ? 10 : 8} box={8} className={both ? "mb-1" : ""}>
    {both ? <path d="M4 0l3 3.500H1zM4 8 1 4.500h6z" fill="#e5d5a8" /> : <path d="M4 7 1 2.500h6z" fill="#e5d5a8" />}
  </Svg>
);

function GoldHead({ children, both, edge }) {
  return (
    <th className={`bg-[#c4a250] pb-1 font-bold text-[#fbf6e8] ${edge ? "border-l border-[#e6dab8]" : ""}`}>
      <button className="inline-flex items-center gap-2.5">{children}<Sort both={both} /></button>
    </th>
  );
}

function BalanceTable() {
  const cell = "border-b-4 border-b-[#ebebeb]";
  const gold = `${cell} border-l border-l-[#dbe9e4] bg-[#f0f3f2] pb-1 text-[11px] text-[#6d7088]`;
  return (
    <div className="relative mt-[38px] h-[490px] overflow-hidden">
      <table className="w-full table-fixed border-separate border-spacing-0 text-center text-[10px]">
        <colgroup>
          <col className="w-[140px]" />
          <col className="w-[140px]" />
          <col className="w-[90px]" />
          <col className="w-[212px]" />
          <col className="w-[112px]" />
          <col className="w-[213px]" />
          <col className="w-[213px]" />
        </colgroup>
        <thead>
          <tr className="h-10 text-[#7a88a0]">
            <th className="px-0 text-left"><input aria-label="Search" placeholder="Search" className="h-7 w-full border-b border-[#bfc3d2] bg-transparent px-1 pb-1 font-normal placeholder:text-[#777777] placeholder:opacity-100" /></th>
            <th className="pb-1"><button className="font-normal text-[#d0ab55]">Hide zero balances</button></th>
            <th className="pb-1">Explorer</th>
            <GoldHead>Main balance</GoldHead>
            <th className="pb-1">Transfer</th>
            <GoldHead both>Trading Balance</GoldHead>
            <GoldHead both edge>In Orders</GoldHead>
          </tr>
        </thead>
        <tbody>
          {coins.map(([name, icon, amount, dep, wd]) => (
            <tr key={name} className="h-[47px] bg-[#f5f5f5]">
              <td className={cell}><span className="flex items-center gap-[19px] pl-[7px] text-[11px] text-[#33334a]">{icon}<span className="pb-0.5">{name}</span></span></td>
              <td className={cell}><span className="flex gap-[7px] pr-[7px]"><ActionButton on={dep}>Deposit</ActionButton><ActionButton on={wd}>Withdraw</ActionButton></span></td>
              <td className={`${cell} pb-1`}><a href="#" aria-label={`${name} explorer`} className="flex justify-center"><ExplorerIcon /></a></td>
              <td className={gold}>{amount}</td>
              <td className={`${cell} border-l border-l-[#dbe9e4]`}><span className="flex justify-center gap-2.5"><ArrowButton /><ArrowButton right on={wd} /></span></td>
              <td className={gold}>0</td>
              <td className={gold}>0</td>
            </tr>
          ))}
        </tbody>
      </table>
      <div className="absolute top-10 right-0 bottom-0 w-1 bg-[#f5f5f5]"><div className="h-7 bg-[#dcdcdc]" /></div>
    </div>
  );
}

function Main() {
  return (
    <main className="flex-1">
      <div className="mx-auto max-w-[1120px]">
        <div className="flex h-7 items-center justify-between rounded-b bg-[#c4a250] px-5 pb-0.5 text-[12px] text-[#4a3d22]">
          <p>We recommend you to turn on <a href="#" className="font-bold text-black underline">2FA</a> and pass <a href="#" className="font-bold text-black underline">KYC</a></p>
          <button className="flex items-center gap-2">
            <Svg><rect x=".6" y=".6" width="14.800" height="14.800" rx="2" stroke="#222" /><path d="M4 4l8 8M12 4l-8 8" stroke="#222" /></Svg>
            CLOSE
          </button>
        </div>
        <h1 className="pt-1 text-[27px] leading-8 font-semibold text-[#23233c]">Balance</h1>
        <BalanceTable />
      </div>
    </main>
  );
}

const footerColumns = [
  ["TRADING TOOLS", ["LIVE TRADING", "EXCHANGE", "BALANCE", "CODES"]],
  ["SPECIAL PROGRAMS", ["REFERRAL", "S.M.A.R.T.", "LIST NOW"]],
  ["BTC-DAMS INFO", ["ABOUT US", "NEWS", "FEE SCHEDULE", "TERMS OF USE"]],
  ["GET HELP", ["SUPPORT", "F.A.Q."]],
];

function Footer() {
  return (
    <footer className="grid h-[151px] shrink-0 grid-cols-[1fr_766px_1fr] overflow-hidden bg-[#2b2724] text-[11px] text-[#eeeeee]">
      <div className="pt-[103px] pl-3">
        <Logo />
        <div className="ml-0.5 w-[118px] border-t-2 border-dotted border-[#c9b98c]" />
      </div>
      <div className="flex pt-6">
        {footerColumns.map(([head, items]) => (
          <div key={head} className="w-[119px] shrink-0">
            <h2 className="w-16 leading-4 text-[#858280]">{head}</h2>
            <ul>
              {items.map((t) => <li key={t} className="h-7 pt-[7px] leading-4"><a href="#">{t}</a></li>)}
            </ul>
          </div>
        ))}
        <div className="flex flex-col gap-[30px] pt-4 text-[12px] leading-4 text-[#cfcdcb]">
          <div className="flex items-center gap-[7px]">
            <Svg><circle cx="8" cy="8" r="7.300" stroke="#eee" /><path d="M4 12l2-2M12 4l-2 2M6 7.500 8.500 10C7 12 4.500 9.500 6 7.500zM10 8.500 7.500 6C9 4 11.500 6.500 10 8.500z" stroke="#eee" strokeWidth="1.200" /></Svg>
            Socket Status:
            <span className="ml-1.5 flex items-center gap-1.5 text-[#2e8f68]"><span className="h-1.5 w-1.5 rounded-full bg-[#19a974]" />Connected</span>
          </div>
          <div className="flex items-center gap-[7px]">
            <GlobeLine size={16} />
            <label htmlFor="language">Language:</label>
            <span className="flex items-center text-[11px] text-white">
              <select id="language" className="w-12 appearance-none bg-transparent pl-1"><option>English</option></select>
              <Svg size={10} box={10} className="mt-1.5"><path d="M0 2h10L5 9z" fill="#fff" /></Svg>
            </span>
          </div>
          <div className="flex items-center gap-[7px] whitespace-nowrap">
            <Svg><circle cx="8" cy="8" r="7.300" stroke="#eee" strokeWidth="1.200" /><path d="M10.800 5.800a3.600 3.600 0 1 0 0 4.400" stroke="#eee" strokeWidth="1.200" /></Svg>
            2022 btc-dams.com All rights reserved
          </div>
        </div>
      </div>
      <div className="flex flex-col items-end pt-[76px] pr-[15px]">
        <div className="flex gap-2.5 font-[Open_Sans,sans-serif] leading-7 font-extrabold italic">
          <span className="h-[30px] w-[50px] rounded border border-[#d5d5d5] bg-[#f8f8f8] text-center text-[16px] text-[#0b31a0]">VISA</span>
          <span className="relative flex h-[30px] w-[50px] items-center justify-center rounded bg-linear-to-b from-[#06699b] to-[#052050]">
            <Svg size={42} box={42}><circle cx="15" cy="21" r="12" fill="#e8112d" /><circle cx="29" cy="21" r="12" fill="#f7a233" /></Svg>
            <span className="absolute inset-0 text-center text-[8px] leading-[30px] text-white not-italic">MasterCard</span>
          </span>
          <span className="h-[30px] w-[50px] rounded border border-[#f09a2c] bg-[#f5e4c8] text-center text-[13px] text-[#1f3a68]">Pay<span className="text-[#2b6c9c]">Pal</span></span>
        </div>
        <div className="mt-1.5 mr-[39px] flex items-start font-[Open_Sans,sans-serif]">
          <svg width="38" height="46" viewBox="0 0 38 46" className="z-10 shrink-0" aria-hidden="true">
            <path d="M7 20v-6a12 12 0 0 1 24 0v6" fill="none" stroke="#d2d2d2" strokeWidth="4" />
            <circle cx="19" cy="32" r="17" fill="#4a9a20" stroke="#d5d5d5" strokeWidth="3" />
            <path d="M9 32h5v12H9zM15 32l5-4 1-5c4 0 3 4 2 7h6v14H15z" fill="#fff" />
          </svg>
          <div className="mt-[19px] -ml-2 w-16 rounded-r-xl bg-[#6cba2d] pr-1.5 pb-3 pl-2">
            <p className="text-center text-[10px] leading-[14px] font-bold text-white italic">COMODO</p>
            <p className="rounded-r-md bg-white text-center text-[10px] leading-3 font-semibold text-[#555555]">SECURE</p>
          </div>
        </div>
      </div>
    </footer>
  );
}

/* ---------- downloads ---------- */

const Pic = () => <Svg size={17} box={17}><path d="M0 1h17v15H0z" fill="#b9b9b9" /><path d="M1 2h15v13H1z" fill="#eee" /><path d="M2 3h13v11H2z" fill="#3d3d3d" /></Svg>;
const Zip = () => <Svg size={17} box={17}><path d="M1 1h15v15H1z" fill="#b18d62" /><path d="M1 1h15v5H1z" fill="#cbab80" /><path d="M8.500 2v7M5.500 5.500h6" stroke="#e8dcc8" /></Svg>;
const Word = () => <Svg size={17} box={17}><path d="M2 0h9l4 4v13H2z" fill="#4d7f9c" /><path d="m4.500 6 1.500 7 2.500-6L11 13l1.500-7" stroke="#fff" strokeWidth="1.300" /></Svg>;
const Pdf = () => <Svg size={17} box={17}><path d="M2 0h13v17H2z" fill="#c9252d" /><path d="M4 13c3-1 5-5 4-9-1 4 1 7 5 7-3-1-7 0-9 2z" stroke="#fff" /></Svg>;
const downloads = [
  ["20220321_06....jpg", Pic], ["Passport_Suh....jpg", Pic], ["Passport_Suh....jpg", Pic], ["2022_03_21....png", Pic],
  ["7ffe0cf5-98....jpeg", Pic], ["8df768aa-1....jpeg", Pic], ["Passport_Suh....jpg", Pic], ["NFTs-Power....doc", Word],
  ["pdf2doc (1).zip", Zip], ["pdf2doc.zip", Zip], ["NFTs-PowerC....pdf", Pdf], ["NFTs-PowerC....pdf", Pdf],
];

function Downloads() {
  return (
    <section className="flex h-[62px] shrink-0 items-center border-t-2 border-[#d0d0d2] bg-[#f5f5f5] pl-[3px] text-[16px] text-[#3c4043]" aria-label="Downloads">
      {downloads.map(([t, Icon], k) => (
        <div key={k} className="flex h-12 w-[233px] shrink-0 items-center gap-3 border-r border-[#c9cacc] pr-4 pl-[18px]">
          <Icon />
          <a href="#" className="flex-1 whitespace-nowrap">{t}</a>
          <button aria-label={`Options for ${t}`} className="text-[#777777]"><ChevronUp size={14} strokeWidth={2.5} /></button>
        </div>
      ))}
      <div className="flex flex-1 items-center justify-end gap-2.5 pr-2.5">
        <button className="h-[34px] w-[89px] rounded border border-[#cfd0d2] text-[15px] font-semibold text-[#0a73e0]">Show all</button>
        <button aria-label="Close downloads" className="text-[#6b6b6b]"><X size={16} strokeWidth={2.5} /></button>
      </div>
    </section>
  );
}

export default function App() {
  return (
    <div className="flex h-screen flex-col overflow-hidden bg-[#ebebeb] font-[Open_Sans,sans-serif] text-[15px] leading-5">
      <div className="flex h-6 shrink-0 items-center justify-between bg-linear-to-b from-[#5d5a4f] to-[#3c3b37] pr-1 pl-1.5 text-[#dfdbd2]">
        <p className="font-bold">Balance — BTC-dams - Google Chrome</p>
        <div className="flex items-center gap-3">
          <Wifi size={18} />
          <span className="rounded-sm bg-[#dfdbd2] px-1 text-[13px] leading-5 text-[#3c3b37]">En</span>
          <Bluetooth size={16} className="-mr-1 text-[#8b887f]" />
          <Mail size={20} fill="#dfdbd2" color="#45433d" />
          <BatteryCharging size={23} />
          <VolumeX size={18} className="text-[#8b887f]" />
          <span>6:50 AM</span>
          <span className="flex items-center gap-1.5"><Power size={16} strokeWidth={2.5} />suhas</span>
        </div>
      </div>
      <div className="flex min-h-0 flex-1">
        <Launcher />
        <div className="flex min-w-0 flex-1 flex-col">
          <TabStrip />
          <Toolbar />
          <Bookmarks />
          <div className="flex min-h-0 flex-1">
            <div className="flex min-w-0 flex-1 flex-col font-[Roboto,sans-serif] leading-4">
              <SiteHeader />
              <Main />
              <Footer />
            </div>
            <div className="flex w-[15px] shrink-0 flex-col items-center bg-[#e6e6e6] text-[#8a8a8a]">
              <Svg size={15} box={15}><path d="M4 10h7L7.500 6z" fill="#8f8f8f" /></Svg>
              <div className="w-[11px] grow-[19] bg-[#b9b9b9]" />
              <div className="grow" />
              <Svg size={15} box={15}><path d="M4 6h7l-3.500 4z" fill="#505050" /></Svg>
            </div>
          </div>
          <Downloads />
        </div>
      </div>
    </div>
  );
}
